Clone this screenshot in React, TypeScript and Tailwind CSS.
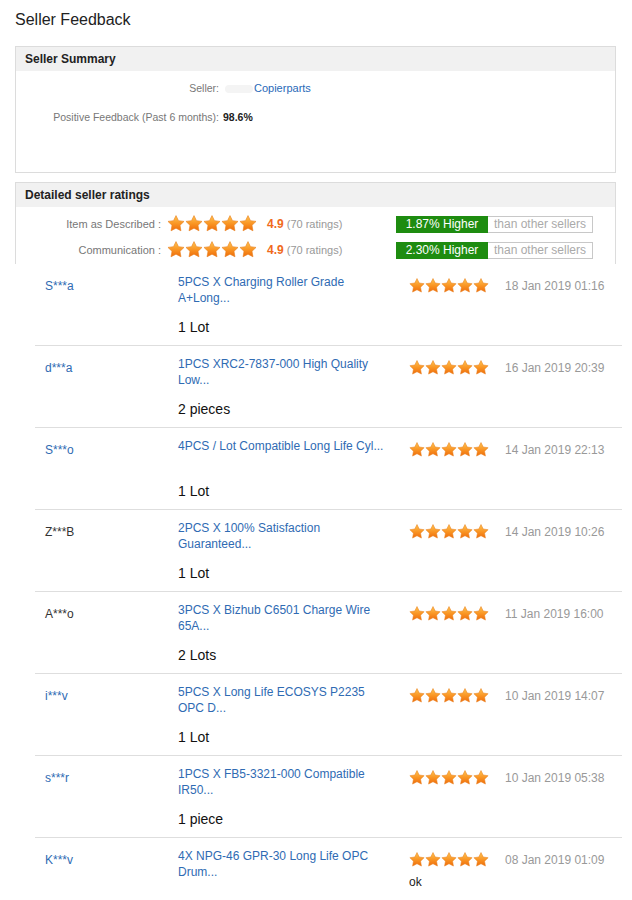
import React from "react";

type Review = {
  buyer: string;
  buyerLink: boolean;
  title: string[];
  qty: string;
  date: string;
  note?: string;
};

const reviews: Review[] = [
  { buyer: "S***a", buyerLink: true, title: ["5PCS X Charging Roller Grade", "A+Long..."], qty: "1 Lot", date: "18 Jan 2019 01:16" },
  { buyer: "d***a", buyerLink: true, title: ["1PCS XRC2-7837-000 High Quality", "Low..."], qty: "2 pieces", date: "16 Jan 2019 20:39" },
  { buyer: "S***o", buyerLink: true, title: ["4PCS / Lot Compatible Long Life Cyl..."], qty: "1 Lot", date: "14 Jan 2019 22:13" },
  { buyer: "Z***B", buyerLink: false, title: ["2PCS X 100% Satisfaction", "Guaranteed..."], qty: "1 Lot", date: "14 Jan 2019 10:26" },
  { buyer: "A***o", buyerLink: false, title: ["3PCS X Bizhub C6501 Charge Wire", "65A..."], qty: "2 Lots", date: "11 Jan 2019 16:00" },
  { buyer: "i***v", buyerLink: true, title: ["5PCS X Long Life ECOSYS P2235", "OPC D..."], qty: "1 Lot", date: "10 Jan 2019 14:07" },
  { buyer: "s***r", buyerLink: true, title: ["1PCS X FB5-3321-000 Compatible", "IR50..."], qty: "1 piece", date: "10 Jan 2019 05:38" },
  { buyer: "K***v", buyerLink: true, title: ["4X NPG-46 GPR-30 Long Life OPC", "Drum..."], qty: "", date: "08 Jan 2019 01:09", note: "ok" },
];

function Star({ size }: { size: number }) {
  return (
    <svg width={size} height={size} viewBox="0 0 24 24" className="shrink-0">
      <defs>
        <linearGradient id="starGrad" x1="0" y1="0" x2="0" y2="1">
          <stop offset="0%" stopColor="#ffc451" />
          <stop offset="55%" stopColor="#f99322" />
          <stop offset="100%" stopColor="#ee6b0b" />
        </linearGradient>
      </defs>
      <path
        d="M12 0.8l3.3 6.7 7.4 1.05-5.35 5.2 1.27 7.35L12 17.6l-6.62 3.5 1.27-7.35L1.3 8.55l7.4-1.05z"
        fill="url(#starGrad)"
        stroke="#e8801e"
        strokeWidth="0.8"
        strokeLinejoin="round"
      />
    </svg>
  );
}

function Stars({ size }: { size: number }) {
  return (
    <div className="flex">
      {[0, 1, 2, 3, 4].map((i) => (
        <Star key={i} size={size} />
      ))}
    </div>
  );
}

function RatingRow({ label, pct }: { label: string; pct: string }) {
  return (
    <div className="flex items-center h-[26px]">
      <div className="w-[145px] text-right text-[11px] text-[#777]">{label} :</div>
      <div className="ml-[6px]">
        <Stars size={18} />
      </div>
      <div className="ml-[10px] w-[129px] text-[11px]">
        <span className="text-[12px] font-bold text-[#f06a1c]">4.9</span>{" "}
        <span className="text-[#999]">(70 ratings)</span>
      </div>
      <div className="flex h-[17px] text-[12px] leading-[17px]">
        <div className="w-[92px] bg-[#1e8c10] text-white text-center">{pct} Higher</div>
        <div className="w-[105px] border border-l-0 border-[#c8c8c8] text-[#aaa] text-center leading-[15px]">
          than other sellers
        </div>
      </div>
    </div>
  );
}

export default function App() {
  return (
    <div className="w-[632px] bg-white text-[#333]" style={{ fontFamily: '"Liberation Sans", Arial, sans-serif' }}>
      <h1 className="pl-[15px] pt-[10px] text-[16px] leading-[20px] font-normal text-[#222]">Seller Feedback</h1>

      {/* Seller Summary */}
      <div className="ml-[15px] mt-[16px] w-[601px] h-[127px] border border-[#dcdcdc]">
        <div className="h-[24px] bg-[#f1f1f1] pl-[9px] text-[12px] font-bold leading-[24px] text-[#222]">
          Seller Summary
        </div>
        <div className="pt-[10px] text-[10.5px]">
          <div className="flex h-[15px] items-center">
            <div className="w-[203px] text-right text-[#777] whitespace-nowrap">Seller:</div>
            <span className="ml-[6px] h-[8px] w-[28px] rounded-sm bg-[#f4f4f4]" />
            <span className="ml-[1px] text-[11px] text-[#2a6ab8]">Copierparts</span>
          </div>
          <div className="mt-[14px] flex h-[15px] items-center">
            <div className="w-[203px] text-right text-[#777] whitespace-nowrap">Positive Feedback (Past 6 months):</div>
            <span className="ml-[4px] font-bold text-[#222]">98.6%</span>
          </div>
        </div>
      </div>

      {/* Detailed seller ratings */}
      <div className="ml-[15px] mt-[9px] w-[601px] h-[82px] border border-b-0 border-[#dcdcdc]">
        <div className="h-[24px] bg-[#f1f1f1] pl-[9px] text-[12px] font-bold leading-[24px] text-[#222]">
          Detailed seller ratings
        </div>
        <div className="pt-[4px]">
          <RatingRow label="Item as Described" pct="1.87%" />
          <RatingRow label="Communication" pct="2.30%" />
        </div>
      </div>

      {/* Feedback list */}
      <div className="ml-[35px] w-[587px]">
        {reviews.map((r, i) => (
          <div key={i} className="flex h-[82px] border-b border-[#dedede]">
            <div className={`w-[143px] pl-[10px] pt-[14px] text-[12px] leading-[16px] ${r.buyerLink ? "text-[#2f6bb3]" : "text-[#333]"}`}>
              {r.buyer}
            </div>
            <div className="w-[231px] pt-[10px]">
              <div className="h-[32px] text-[12px] leading-[16px] text-[#2f6bb3]">
                {r.title.map((t, j) => (
                  <div key={j}>{t}</div>
                ))}
              </div>
              {r.qty && <div className="mt-[12px] text-[14px] leading-[18px] text-[#111]">{r.qty}</div>}
            </div>
            <div className="w-[96px] pt-[14px]">
              <Stars size={16} />
              {r.note && <div className="mt-[6px] text-[12px] leading-[16px] text-[#222]">{r.note}</div>}
            </div>
            <div className="pt-[14px] text-[12px] leading-[16px] text-[#999]">{r.date}</div>
          </div>
        ))}
      </div>
    </div>
  );
}
